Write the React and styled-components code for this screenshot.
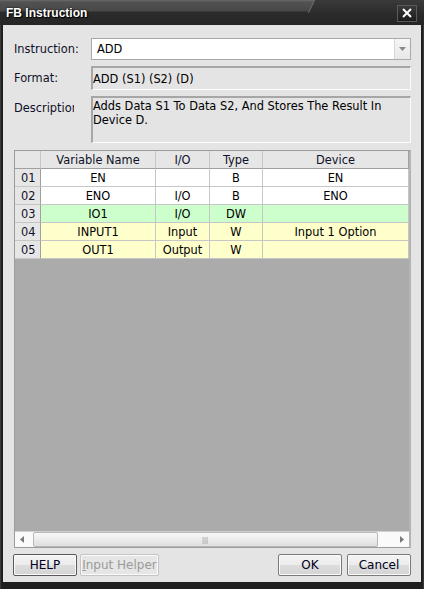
import React from "react";
import styled, { createGlobalStyle } from "styled-components";

const Global = createGlobalStyle`
  html, body { margin: 0; padding: 0; background: #1e1e1e; }
  body { font-family: "DejaVu Sans", Tahoma, sans-serif; font-size: 11.4px; }
  * { box-sizing: border-box; }
`;

const Frame = styled.div`
  width: 424px;
  height: 589px;
  background: #1f1f1f;
  display: flex;
  flex-direction: column;
  padding: 0 2px 7px 2px;
  border-left: 1px solid #3a3a3a;
  border-right: 1px solid #3a3a3a;
`;

const TitleBar = styled.div`
  position: relative;
  height: 25px;
  margin: 0 -3px;
  display: flex;
  align-items: center;
  justify-content: space-between;
  padding: 0 6px 0 6px;
  background: linear-gradient(to bottom, #6a6a6a 0px, #525252 2px, #484848 11px, #2c2c2c 12px, #252525 25px);
  overflow: hidden;
  &::after {
    content: "";
    position: absolute;
    top: 0;
    right: -10px;
    width: 122px;
    height: 13px;
    background: linear-gradient(to bottom, #3a3a3a, #2c2c2c);
    transform: skewX(-25deg);
    border-left: 1px solid #6a6a6a;
  }
`;

const Title = styled.span`
  position: relative;
  z-index: 1;
  font-family: "Liberation Sans", Arial, sans-serif;
  font-weight: bold;
  font-size: 12px;
  color: #ffffff;
  text-shadow: 1px 1px 1px #000, 0 0 2px #000;
  margin-top: 1px;
`;

const CloseBtn = styled.div`
  position: relative;
  z-index: 1;
  width: 20px;
  height: 17px;
  margin-right: 1px;
  margin-top: 1px;
  border: 1px solid #5a5a5a;
  background: linear-gradient(to bottom, #3a3a3a, #1c1c1c);
  display: flex;
  align-items: center;
  justify-content: center;
`;

const Client = styled.div`
  flex: 1;
  background: #e4e4e4;
  display: flex;
  flex-direction: column;
  padding: 13px 10px 6px 11px;
`;

const Form = styled.div`
  display: grid;
  grid-template-columns: 77px 1fr;
  row-gap: 6px;
  align-items: center;
`;

const Label = styled.div`
  color: #101028;
  white-space: nowrap;
  overflow: hidden;
  width: ${(p) => (p.$clip ? "60px" : "auto")};
  align-self: ${(p) => (p.$top ? "start" : "center")};
  padding-top: ${(p) => (p.$top ? "5px" : "0")};
`;

const Combo = styled.div`
  height: 22px;
  background: #ffffff;
  border: 1px solid #a9a9a9;
  display: flex;
  align-items: center;
  padding-left: 5px;
  color: #000;
`;

const ComboText = styled.span`
  flex: 1;
`;

const DropBtn = styled.div`
  width: 16px;
  height: 20px;
  border-left: 1px solid #d8d8d8;
  background: linear-gradient(to bottom, #f6f6f6, #e8e8e8);
  display: flex;
  align-items: center;
  justify-content: center;
`;

const ReadOnly = styled.div`
  height: ${(p) => p.$h}px;
  background: #e4e4e4;
  border-top: 2px solid #a6a6a6;
  border-left: 2px solid #a6a6a6;
  border-right: 1px solid #fbfbfb;
  border-bottom: 1px solid #fbfbfb;
  color: #000;
  padding: ${(p) => (p.$multi ? "1px 0 0 0" : "3px 0 0 0")};
  line-height: ${(p) => (p.$multi ? "14px" : "16px")};
`;

const Grid = styled.div`
  flex: 1;
  margin-top: 7px;
  border: 1px solid #9c9c9c;
  border-right: 2px solid #b4b4b4;
  background: #ababab;
  display: flex;
  flex-direction: column;
`;

const Table = styled.div`
  display: grid;
  grid-template-columns: 26px 115px 54px 53px 1fr;
  grid-auto-rows: 18px;
`;

const HeadCell = styled.div`
  background: #e6e6e6;
  border-right: 1px solid ${(p) => (p.$last ? "#a0a0a0" : "#c6c6c6")};
  border-bottom: 1px solid #a0a0a0;
  color: #101028;
  display: flex;
  align-items: center;
  justify-content: center;
  white-space: nowrap;
`;

const NumCell = styled.div`
  background: #e6e6e6;
  border-right: 1px solid #a0a0a0;
  border-bottom: 1px solid #c6c6c6;
  color: #101028;
  display: flex;
  align-items: center;
  padding-left: 6px;
`;

const rowBg = { white: "#ffffff", green: "#ccffcc", yellow: "#ffffcc" };

const Cell = styled.div`
  background: ${(p) => rowBg[p.$tone]};
  border-right: 1px solid #c6c6c6;
  border-bottom: 1px solid #c6c6c6;
  color: #000;
  display: flex;
  align-items: center;
  justify-content: center;
  white-space: nowrap;
  overflow: hidden;
`;

const Empty = styled.div`
  flex: 1;
`;

const HScroll = styled.div`
  height: 16px;
  background: #f4f4f4;
  display: flex;
  align-items: stretch;
  border-top: 1px solid #d0d0d0;
`;

const ArrowBtn = styled.div`
  width: ${(p) => p.$w}px;
  background: #fafafa;
  display: flex;
  align-items: center;
  justify-content: ${(p) => (p.$right ? "flex-end" : "flex-start")};
  padding: 0 5px;
`;

const Thumb = styled.div`
  width: 345px;
  background: linear-gradient(to bottom, #f8f8f8 0%, #ececec 50%, #dedede 100%);
  border: 1px solid #b8b8b8;
  border-radius: 2px;
  display: flex;
  align-items: center;
  justify-content: center;
  padding-right: 1px;
`;

const Grip = styled.span`
  font-family: "Liberation Sans", Arial, sans-serif;
  font-size: 8px;
  color: #9a9a9a;
`;

const Track = styled.div`
  flex: 1;
  background: #fafafa;
`;

const ButtonRow = styled.div`
  display: flex;
  align-items: center;
  margin-top: 6px;
  gap: 3px;
  margin-left: -1px;
`;

const Spacer = styled.div`
  flex: 1;
`;

const Button = styled.div`
  width: ${(p) => p.$w}px;
  height: 22px;
  border: 1px solid ${(p) => (p.$disabled ? "#c4c4c4" : p.$default ? "#5a5a5a" : "#7a7a7a")};
  border-radius: 2px;
  background: ${(p) =>
    p.$disabled ? "#e6e6e6" : "linear-gradient(to bottom, #f4f4f4 0%, #ebebeb 50%, #dddddd 51%, #d4d4d4 100%)"};
  box-shadow: inset 0 0 0 1px #fafafa;
  color: ${(p) => (p.$disabled ? "#9a9a9a" : "#000020")};
  display: flex;
  align-items: center;
  justify-content: center;
  font-size: 12px;
  margin-left: ${(p) => p.$ml || 0}px;
`;

const U = styled.span`
  text-decoration: underline;
`;

const rows = [
  { n: "01", name: "EN", io: "", type: "B", dev: "EN", tone: "white" },
  { n: "02", name: "ENO", io: "I/O", type: "B", dev: "ENO", tone: "white" },
  { n: "03", name: "IO1", io: "I/O", type: "DW", dev: "", tone: "green" },
  { n: "04", name: "INPUT1", io: "Input", type: "W", dev: "Input 1 Option", tone: "yellow" },
  { n: "05", name: "OUT1", io: "Output", type: "W", dev: "", tone: "yellow" },
];

export default function App() {
  return (
    <>
      <Global />
      <Frame>
        <TitleBar>
          <Title>FB Instruction</Title>
          <CloseBtn>
            <svg width="12" height="10" viewBox="0 0 12 10">
              <path d="M2 1 L10 9 M10 1 L2 9" stroke="#ffffff" strokeWidth="2" />
            </svg>
          </CloseBtn>
        </TitleBar>
        <Client>
          <Form>
            <Label>Instruction:</Label>
            <Combo>
              <ComboText>ADD</ComboText>
              <DropBtn>
                <svg width="7" height="4" viewBox="0 0 7 4">
                  <path d="M0 0 H7 L3.5 4 Z" fill="#8a8a8a" />
                </svg>
              </DropBtn>
            </Combo>
            <Label>Format:</Label>
            <ReadOnly $h={24}>ADD (S1) (S2) (D)</ReadOnly>
            <Label $top $clip>Description</Label>
            <ReadOnly $h={47} $multi>
              Adds Data S1 To Data S2, And Stores The Result In Device D.
            </ReadOnly>
          </Form>
          <Grid>
            <Table>
              <HeadCell />
              <HeadCell>Variable Name</HeadCell>
              <HeadCell>I/O</HeadCell>
              <HeadCell>Type</HeadCell>
              <HeadCell $last>Device</HeadCell>
              {rows.map((r) => (
                <React.Fragment key={r.n}>
                  <NumCell>{r.n}</NumCell>
                  <Cell $tone={r.tone}>{r.name}</Cell>
                  <Cell $tone={r.tone}>{r.io}</Cell>
                  <Cell $tone={r.tone}>{r.type}</Cell>
                  <Cell $tone={r.tone}>{r.dev}</Cell>
                </React.Fragment>
              ))}
            </Table>
            <Empty />
            <HScroll>
              <ArrowBtn $w={18}>
                <svg width="4" height="7" viewBox="0 0 4 7">
                  <path d="M4 0 V7 L0 3.5 Z" fill="#7a7a7a" />
                </svg>
              </ArrowBtn>
              <Thumb>
                <Grip>|||</Grip>
              </Thumb>
              <Track />
              <ArrowBtn $w={18} $right>
                <svg width="4" height="7" viewBox="0 0 4 7">
                  <path d="M0 0 V7 L4 3.5 Z" fill="#7a7a7a" />
                </svg>
              </ArrowBtn>
            </HScroll>
          </Grid>
          <ButtonRow>
            <Button $w={64} $default>HELP</Button>
            <Button $w={79} $disabled>
              <U>I</U>nput Helper
            </Button>
            <Spacer />
            <Button $w={64}>OK</Button>
            <Button $w={64} $ml={2}>Cancel</Button>
          </ButtonRow>
        </Client>
      </Frame>
    </>
  );
}
